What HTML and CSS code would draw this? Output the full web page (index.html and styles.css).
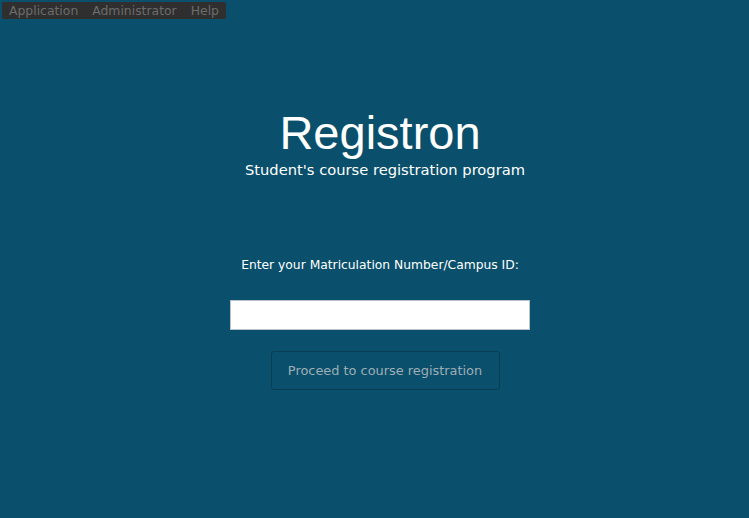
FILE: index.html
```html
<!DOCTYPE html>
<html>
<head>
<meta charset="utf-8">
<link rel="stylesheet" href="styles.css">
</head>
<body>
<div class="menubar">
  <span class="menu-item">Application</span>
  <span class="menu-item">Administrator</span>
  <span class="menu-item">Help</span>
</div>
<main class="main">
  <h1 class="title">Registron</h1>
  <p class="subtitle">Student's course registration program</p>
  <label class="label" for="mat">Enter your Matriculation Number/Campus ID:</label>
  <input class="input" id="mat" type="text">
  <button class="button">Proceed to course registration</button>
</main>
</body>
</html>
```

FILE: styles.css
```css
html, body {
  margin: 0;
  padding: 0;
  height: 100%;
}
body {
  background: #0a506c;
  font-family: "DejaVu Sans", sans-serif;
  overflow: hidden;
}
.menubar {
  display: inline-flex;
  background: #2f2f2f;
  margin: 2px 0 0 2px;
  padding: 1px 7px 1px 7px;
  gap: 14px;
  border-radius: 2px;
}
.menu-item {
  color: #6c6c6c;
  font-size: 12.4px;
  line-height: 15px;
}
.main {
  display: flex;
  flex-direction: column;
  align-items: center;
  padding-left: 11px;
}
.title {
  margin: 87px 0 0 0;
  font-family: "Liberation Sans", Arial, sans-serif;
  font-weight: normal;
  font-size: 47px;
  line-height: 54px;
  color: #ffffff;
}
.subtitle {
  margin: 0 0 0 10px;
  font-size: 14.7px;
  line-height: 19px;
  color: #ffffff;
}
.label {
  margin-top: 78px;
  font-size: 12.3px;
  line-height: 16px;
  color: #ffffff;
}
.input {
  margin-top: 27px;
  box-sizing: border-box;
  width: 300px;
  height: 30px;
  border: 1px solid #b8c2c8;
  background: #ffffff;
  padding: 0 4px;
}
.button {
  margin: 21px 0 0 10px;
  box-sizing: border-box;
  width: 229px;
  height: 39px;
  background: #0a506c;
  border: 1px solid #083e54;
  border-radius: 3px;
  color: #9fadb5;
  font-family: "DejaVu Sans", sans-serif;
  font-size: 12.9px;
}
```
